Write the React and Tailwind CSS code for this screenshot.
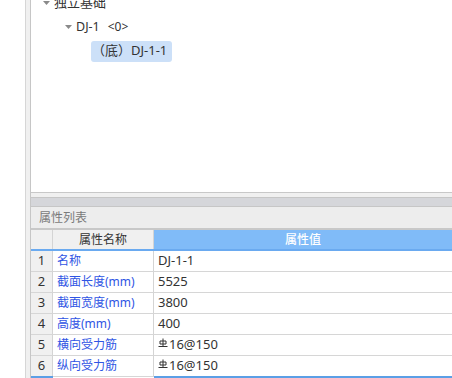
import React from "react";

const font = { fontFamily: '"Noto Sans", "Noto Sans CJK SC", sans-serif' };

function Arrow() {
  return (
    <svg width="7" height="4" viewBox="0 0 7 4" className="shrink-0">
      <path d="M0 0 L7 0 L3.5 4 Z" fill="#8a8a8a" />
    </svg>
  );
}

function Rebar() {
  return (
    <svg width="10" height="10" viewBox="0 0 10 10" className="shrink-0 mr-[1px] -mt-[5px]">
      <path d="M5 0.5 V8.5 M2 3 H8 V6 H2 Z M0.5 8.5 H9.5" fill="none" stroke="#333" strokeWidth="1" />
    </svg>
  );
}

const rows = [
  { n: "1", k: "名称", v: "DJ-1-1" },
  { n: "2", k: "截面长度(mm)", v: "5525" },
  { n: "3", k: "截面宽度(mm)", v: "3800" },
  { n: "4", k: "高度(mm)", v: "400" },
  { n: "5", k: "横向受力筋", v: "16@150", rebar: true },
  { n: "6", k: "纵向受力筋", v: "16@150", rebar: true },
];

export default function App() {
  return (
    <div className="w-[452px] h-[378px] overflow-hidden bg-white flex text-[12px] text-[#333]" style={font}>
      <div className="w-[25px] shrink-0 bg-white" />
      <div className="w-[1px] shrink-0 bg-[#d6d6d6]" />
      <div className="w-[4px] shrink-0 bg-[#f0f0f0]" />
      <div className="flex-1 flex flex-col border-l border-[#c6c6c6] min-w-0">
        {/* tree */}
        <div className="h-[193px] shrink-0 bg-white border-b border-[#c8c8c8] overflow-hidden">
          <div className="flex flex-col -mt-[9px]">
            <div className="h-[24px] flex items-center pl-[12px] gap-[4px] text-[13px]">
              <Arrow />
              <span>独立基础</span>
            </div>
            <div className="h-[24px] flex items-center pl-[34px] gap-[4px] text-[12.5px]">
              <Arrow />
              <span>DJ-1</span>
              <span className="ml-[4px] text-[12px]">&lt;0&gt;</span>
            </div>
            <div className="h-[24px] flex items-center pl-[60px]">
              <div className="h-[21px] w-[81px] rounded-[3px] bg-[#cce0f8] flex items-center pl-[1px] text-[13px] whitespace-nowrap">
                （底）DJ-1-1
              </div>
            </div>
          </div>
        </div>
        <div className="h-[4px] shrink-0 bg-[#f0f0f0]" />
        <div className="h-[10px] shrink-0 bg-[#d5d6da] border-t border-b border-[#c6c6c6]" />
        <div className="h-[23px] shrink-0 bg-[#ededed] border-b-2 border-[#c8c8c8] flex items-center pl-[8px] text-[#7a7a7a]">
          属性列表
        </div>
        {/* table */}
        <div className="grid grid-cols-[22px_101px_1fr] h-[21px] shrink-0 border-b-2 border-[#6aaaf0]">
          <div className="bg-[#f0f0f0] border-r border-[#d4d4d4]" />
          <div className="bg-[#f0f0f0] border-r border-[#d4d4d4] flex items-center justify-center">属性名称</div>
          <div className="bg-[#80bbf8] flex items-center justify-center text-white font-medium">属性值</div>
        </div>
        {rows.map((r, i) => (
          <div
            key={r.n}
            className={
              "grid grid-cols-[22px_101px_1fr] shrink-0 " +
              (i < rows.length - 1 ? "h-[21px] border-b border-[#d6d6d6]" : "h-[20px]")
            }
          >
            <div className="bg-[#f0f0f0] border-r border-[#d4d4d4] flex items-center justify-center text-[13px]">{r.n}</div>
            <div className="border-r border-[#d4d4d4] flex items-center pl-[4px] text-[#2f55e4] whitespace-nowrap">{r.k}</div>
            <div className="flex items-center pl-[4px] text-[13px]">
              {r.rebar && <Rebar />}
              {r.v}
            </div>
          </div>
        ))}
        <div className="grid grid-cols-[22px_101px_1fr] h-[4px] shrink-0">
          <div className="border-t-2 border-[#5b9fe6] bg-[#f0f0f0]" />
          <div className="border-t border-[#d6d6d6]" />
          <div className="border-t-2 border-[#5b9fe6]" />
        </div>
      </div>
    </div>
  );
}
